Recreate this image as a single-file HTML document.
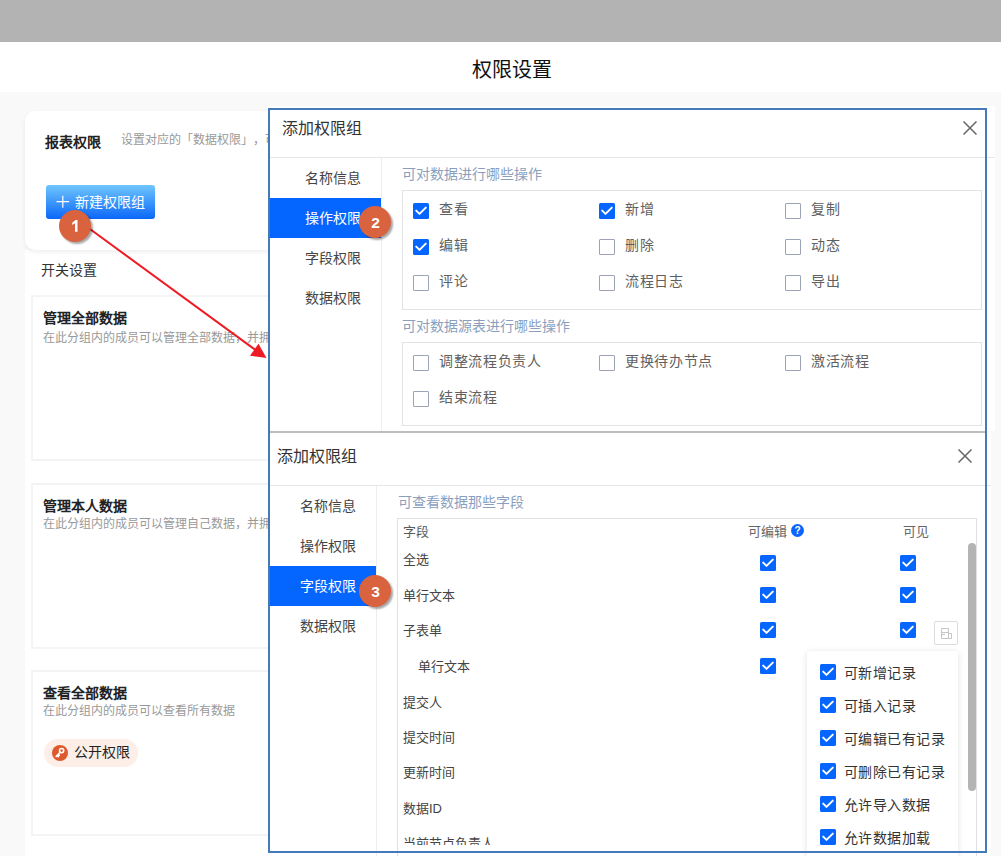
<!DOCTYPE html>
<html lang="zh-CN">
<head>
<meta charset="utf-8">
<style>
*{margin:0;padding:0;box-sizing:border-box;}
html,body{width:1001px;height:856px;overflow:hidden;}
body{position:relative;background:#f9f9f9;font-family:"Liberation Sans",sans-serif;color:#333;}
.a{position:absolute;}
.t{position:absolute;white-space:nowrap;line-height:1;}
#topbar{left:0;top:0;width:1001px;height:42px;background:#b3b3b3;}
#hdr{left:0;top:42px;width:1001px;height:50px;background:#fff;}
#card0{left:25px;top:111px;width:400px;height:139px;background:#fff;border-radius:10px;box-shadow:0 2px 5px rgba(0,0,0,0.07);}
#panel{left:25px;top:250px;width:400px;height:606px;background:#fff;}
.card{position:absolute;left:31px;width:400px;height:166px;border:2px solid #f3f4f6;background:#fff;}
.btn{left:46px;top:185px;width:109px;height:34px;border-radius:3px;background:linear-gradient(#70c6fd,#0b67f9);}
.badge{position:absolute;width:32px;height:32px;border-radius:50%;background:#d9623f;color:#fff;font-weight:bold;font-size:15.5px;line-height:34px;text-indent:1px;text-align:center;box-shadow:2px 2px 2px rgba(0,0,0,0.35);}
/* dialogs */
.dlg{position:absolute;background:#fff;overflow:hidden;}
.cb{position:absolute;width:16px;height:16px;border-radius:1.5px;}
.cb.on{background:#0565ff;}
.cb.off{border:1.5px solid #9ca3b6;background:#fff;border-radius:1px;}
.cb.on svg{position:absolute;left:0;top:0;}
</style>
</head>
<body>
<div id="topbar" class="a"></div>
<div id="hdr" class="a"></div>
<div class="t" style="left:472px;top:60px;font-size:20px;color:#111;">权限设置</div>

<div id="panel" class="a"></div>
<div id="card0" class="a"></div>
<div class="t" style="left:45px;top:135px;font-size:14px;font-weight:bold;color:#222;">报表权限</div>
<div class="t" style="left:121px;top:134px;font-size:12px;color:#999;">设置对应的「数据权限」<span style="margin-left:6px">，</span>可</div>
<div class="btn a"></div>
<svg class="a" style="left:56px;top:195px;" width="14" height="14"><path d="M0.5 6.6 H13 M6.8 0.8 V12.8" stroke="#fff" stroke-width="1.2"/></svg><div class="t" style="left:75px;top:195px;font-size:14px;color:#fff;">新建权限组</div>

<div class="t" style="left:41px;top:263px;font-size:14px;color:#333;">开关设置</div>
<div class="card" style="top:295px;"></div>
<div class="t" style="left:43px;top:311px;font-size:14px;font-weight:bold;color:#222;">管理全部数据</div>
<div class="t" style="left:43px;top:332px;font-size:12px;color:#999;">在此分组内的成员可以管理全部数据，并拥有</div>
<div class="card" style="top:483px;"></div>
<div class="t" style="left:43px;top:499px;font-size:14px;font-weight:bold;color:#222;">管理本人数据</div>
<div class="t" style="left:43px;top:518px;font-size:12px;color:#999;">在此分组内的成员可以管理自己数据，并拥有</div>
<div class="card" style="top:670px;"></div>
<div class="t" style="left:43px;top:686px;font-size:14px;font-weight:bold;color:#222;">查看全部数据</div>
<div class="t" style="left:43px;top:705px;font-size:12px;color:#999;">在此分组内的成员可以查看所有数据</div>
<div class="a" style="left:44px;top:739px;width:94px;height:28px;border-radius:14px;background:#fdeee8;"></div>
<div class="a" style="left:52px;top:745px;width:16px;height:16px;border-radius:50%;background:#de5a2c;"><svg width="16" height="16" style="position:absolute;left:0;top:0"><circle cx="9.6" cy="5.6" r="2.1" fill="none" stroke="#fff" stroke-width="1.6"/><path d="M8.2 7.2 L4.2 11.4 M5.2 10.4 L6.4 11.6 M6.4 9.2 L7.4 10.2" stroke="#fff" stroke-width="1.6" stroke-linecap="round"/></svg></div>
<div class="t" style="left:74px;top:745px;font-size:14px;color:#222;">公开权限</div>

<!-- DIALOGS -->
<div class="a" style="left:268px;top:106px;width:727px;height:325px;background:#fff;"></div>
<div class="t" style="left:282px;top:121px;font-size:16px;color:#333;">添加权限组</div>
<svg class="a" style="left:963px;top:121px;" width="14" height="14"><path d="M0.5 0.5 L13.5 13.5 M13.5 0.5 L0.5 13.5" stroke="#666" stroke-width="1.5"/></svg>
<div class="a" style="left:268px;top:157px;width:727px;height:1px;background:#e6e6e6;"></div>
<div class="a" style="left:381px;top:158px;width:1px;height:273px;background:#eeeeee;"></div>
<div class="a" style="left:268px;top:198px;width:113px;height:40px;background:#0566ff;"></div>
<div class="t" style="left:305px;top:171px;font-size:14px;color:#444;">名称信息</div>
<div class="t" style="left:305px;top:211px;font-size:14px;color:#fff;">操作权限</div>
<div class="t" style="left:305px;top:251px;font-size:14px;color:#444;">字段权限</div>
<div class="t" style="left:305px;top:291px;font-size:14px;color:#444;">数据权限</div>
<div class="t" style="left:402px;top:167px;font-size:14px;color:#8a9fbe;">可对数据进行哪些操作</div>
<div class="a" style="left:402px;top:190px;width:580px;height:120px;border:1px solid #e3e3e3;"></div>
<div class="cb on" style="left:413px;top:203px;"><svg width="16" height="16" viewBox="0 0 16 16"><path d="M3.2 7.6 L6.5 10.9 L12.8 4.6" fill="none" stroke="#fff" stroke-width="2" stroke-linecap="round" stroke-linejoin="round"/></svg></div>
<div class="t" style="left:439px;top:202px;font-size:14px;color:#606060;letter-spacing:0.7px;">查看</div>
<div class="cb on" style="left:599px;top:203px;"><svg width="16" height="16" viewBox="0 0 16 16"><path d="M3.2 7.6 L6.5 10.9 L12.8 4.6" fill="none" stroke="#fff" stroke-width="2" stroke-linecap="round" stroke-linejoin="round"/></svg></div>
<div class="t" style="left:625px;top:202px;font-size:14px;color:#606060;letter-spacing:0.7px;">新增</div>
<div class="cb off" style="left:785px;top:203px;"></div>
<div class="t" style="left:811px;top:202px;font-size:14px;color:#606060;letter-spacing:0.7px;">复制</div>
<div class="cb on" style="left:413px;top:239px;"><svg width="16" height="16" viewBox="0 0 16 16"><path d="M3.2 7.6 L6.5 10.9 L12.8 4.6" fill="none" stroke="#fff" stroke-width="2" stroke-linecap="round" stroke-linejoin="round"/></svg></div>
<div class="t" style="left:439px;top:238px;font-size:14px;color:#606060;letter-spacing:0.7px;">编辑</div>
<div class="cb off" style="left:599px;top:239px;"></div>
<div class="t" style="left:625px;top:238px;font-size:14px;color:#606060;letter-spacing:0.7px;">删除</div>
<div class="cb off" style="left:785px;top:239px;"></div>
<div class="t" style="left:811px;top:238px;font-size:14px;color:#606060;letter-spacing:0.7px;">动态</div>
<div class="cb off" style="left:413px;top:275px;"></div>
<div class="t" style="left:439px;top:274px;font-size:14px;color:#606060;letter-spacing:0.7px;">评论</div>
<div class="cb off" style="left:599px;top:275px;"></div>
<div class="t" style="left:625px;top:274px;font-size:14px;color:#606060;letter-spacing:0.7px;">流程日志</div>
<div class="cb off" style="left:785px;top:275px;"></div>
<div class="t" style="left:811px;top:274px;font-size:14px;color:#606060;letter-spacing:0.7px;">导出</div>
<div class="t" style="left:402px;top:319px;font-size:14px;color:#8a9fbe;">可对数据源表进行哪些操作</div>
<div class="a" style="left:402px;top:342px;width:580px;height:84px;border:1px solid #e3e3e3;"></div>
<div class="cb off" style="left:413px;top:355px;"></div>
<div class="t" style="left:439px;top:354px;font-size:14px;color:#606060;letter-spacing:0.7px;">调整流程负责人</div>
<div class="cb off" style="left:599px;top:355px;"></div>
<div class="t" style="left:625px;top:354px;font-size:14px;color:#606060;letter-spacing:0.7px;">更换待办节点</div>
<div class="cb off" style="left:785px;top:355px;"></div>
<div class="t" style="left:811px;top:354px;font-size:14px;color:#606060;letter-spacing:0.7px;">激活流程</div>
<div class="cb off" style="left:413px;top:391px;"></div>
<div class="t" style="left:439px;top:390px;font-size:14px;color:#606060;letter-spacing:0.7px;">结束流程</div>
<div class="a" style="left:269px;top:431px;width:718px;height:2px;background:#bdbdbd;"></div>
<div class="a" style="left:270px;top:433px;width:721px;height:423px;background:#fff;"></div>
<div class="t" style="left:277px;top:449px;font-size:16px;color:#333;">添加权限组</div>
<svg class="a" style="left:958px;top:449px;" width="14" height="14"><path d="M0.5 0.5 L13.5 13.5 M13.5 0.5 L0.5 13.5" stroke="#666" stroke-width="1.5"/></svg>
<div class="a" style="left:270px;top:485px;width:721px;height:1px;background:#e6e6e6;"></div>
<div class="a" style="left:376px;top:486px;width:1px;height:370px;background:#eeeeee;"></div>
<div class="a" style="left:270px;top:566px;width:106px;height:40px;background:#0566ff;"></div>
<div class="t" style="left:300px;top:499px;font-size:14px;color:#444;">名称信息</div>
<div class="t" style="left:300px;top:539px;font-size:14px;color:#444;">操作权限</div>
<div class="t" style="left:300px;top:579px;font-size:14px;color:#fff;">字段权限</div>
<div class="t" style="left:300px;top:619px;font-size:14px;color:#444;">数据权限</div>
<div class="t" style="left:398px;top:495px;font-size:14px;color:#8a9fbe;">可查看数据那些字段</div>
<div class="a" style="left:397px;top:518px;width:580px;height:360px;border:1px solid #e0e0e0;"></div>
<div class="a" style="left:398px;top:519px;width:578px;height:326px;overflow:hidden;">
<div class="t" style="left:5px;top:6px;font-size:13px;color:#5a5a5a;">字段</div>
<div class="t" style="left:350px;top:6px;font-size:13px;color:#666;">可编辑</div>
<div class="a" style="left:393px;top:5px;width:13px;height:13px;border-radius:50%;background:#0a66ff;color:#fff;font-size:10px;font-weight:bold;line-height:13px;text-align:center;font-family:'Liberation Sans',sans-serif;">?</div>
<div class="t" style="left:505px;top:6px;font-size:13px;color:#666;">可见</div>
<div class="t" style="left:5px;top:34px;font-size:13px;color:#444;">全选</div>
<div class="t" style="left:5px;top:70px;font-size:13px;color:#444;">单行文本</div>
<div class="t" style="left:5px;top:105px;font-size:13px;color:#444;">子表单</div>
<div class="t" style="left:20px;top:141px;font-size:13px;color:#444;">单行文本</div>
<div class="t" style="left:5px;top:177px;font-size:13px;color:#444;">提交人</div>
<div class="t" style="left:5px;top:212px;font-size:13px;color:#444;">提交时间</div>
<div class="t" style="left:5px;top:247px;font-size:13px;color:#444;">更新时间</div>
<div class="t" style="left:5px;top:283px;font-size:13px;color:#444;">数据ID</div>
<div class="t" style="left:5px;top:318px;font-size:13px;color:#444;">当前节点负责人</div>
<div class="cb on" style="left:362px;top:36px;"><svg width="16" height="16" viewBox="0 0 16 16"><path d="M3.2 7.6 L6.5 10.9 L12.8 4.6" fill="none" stroke="#fff" stroke-width="2" stroke-linecap="round" stroke-linejoin="round"/></svg></div>
<div class="cb on" style="left:362px;top:68px;"><svg width="16" height="16" viewBox="0 0 16 16"><path d="M3.2 7.6 L6.5 10.9 L12.8 4.6" fill="none" stroke="#fff" stroke-width="2" stroke-linecap="round" stroke-linejoin="round"/></svg></div>
<div class="cb on" style="left:362px;top:103px;"><svg width="16" height="16" viewBox="0 0 16 16"><path d="M3.2 7.6 L6.5 10.9 L12.8 4.6" fill="none" stroke="#fff" stroke-width="2" stroke-linecap="round" stroke-linejoin="round"/></svg></div>
<div class="cb on" style="left:362px;top:139px;"><svg width="16" height="16" viewBox="0 0 16 16"><path d="M3.2 7.6 L6.5 10.9 L12.8 4.6" fill="none" stroke="#fff" stroke-width="2" stroke-linecap="round" stroke-linejoin="round"/></svg></div>
<div class="cb on" style="left:502px;top:36px;"><svg width="16" height="16" viewBox="0 0 16 16"><path d="M3.2 7.6 L6.5 10.9 L12.8 4.6" fill="none" stroke="#fff" stroke-width="2" stroke-linecap="round" stroke-linejoin="round"/></svg></div>
<div class="cb on" style="left:502px;top:68px;"><svg width="16" height="16" viewBox="0 0 16 16"><path d="M3.2 7.6 L6.5 10.9 L12.8 4.6" fill="none" stroke="#fff" stroke-width="2" stroke-linecap="round" stroke-linejoin="round"/></svg></div>
<div class="cb on" style="left:502px;top:103px;"><svg width="16" height="16" viewBox="0 0 16 16"><path d="M3.2 7.6 L6.5 10.9 L12.8 4.6" fill="none" stroke="#fff" stroke-width="2" stroke-linecap="round" stroke-linejoin="round"/></svg></div>
</div>
<div class="a" style="left:934px;top:621px;width:24px;height:24px;border:1px solid #dcdcdc;border-radius:2px;background:#fff;"><svg width="24" height="24" style="position:absolute;left:-1px;top:-1px"><path d="M7.5 7.5 H14.5 V17.5 H7.5 Z M7.5 11.5 H14.5 M7.5 13.5 H11 M14.5 12.5 H17.5 V17.5 H14.5" fill="none" stroke="#c6c6c6" stroke-width="1"/></svg></div>
<div class="a" style="left:968px;top:543px;width:8px;height:248px;border-radius:4px;background:#b4b4b4;"></div>
<div class="a" style="left:807px;top:651px;width:151px;height:215px;background:#fff;border-radius:3px;box-shadow:0 1px 6px rgba(0,0,0,0.12);"></div>
<div class="cb on" style="left:820px;top:664px;"><svg width="16" height="16" viewBox="0 0 16 16"><path d="M3.2 7.6 L6.5 10.9 L12.8 4.6" fill="none" stroke="#fff" stroke-width="2" stroke-linecap="round" stroke-linejoin="round"/></svg></div>
<div class="t" style="left:843.5px;top:666px;font-size:14px;color:#333;letter-spacing:0.5px;">可新增记录</div>
<div class="cb on" style="left:820px;top:697px;"><svg width="16" height="16" viewBox="0 0 16 16"><path d="M3.2 7.6 L6.5 10.9 L12.8 4.6" fill="none" stroke="#fff" stroke-width="2" stroke-linecap="round" stroke-linejoin="round"/></svg></div>
<div class="t" style="left:843.5px;top:699px;font-size:14px;color:#333;letter-spacing:0.5px;">可插入记录</div>
<div class="cb on" style="left:820px;top:730px;"><svg width="16" height="16" viewBox="0 0 16 16"><path d="M3.2 7.6 L6.5 10.9 L12.8 4.6" fill="none" stroke="#fff" stroke-width="2" stroke-linecap="round" stroke-linejoin="round"/></svg></div>
<div class="t" style="left:843.5px;top:732px;font-size:14px;color:#333;letter-spacing:0.5px;">可编辑已有记录</div>
<div class="cb on" style="left:820px;top:763px;"><svg width="16" height="16" viewBox="0 0 16 16"><path d="M3.2 7.6 L6.5 10.9 L12.8 4.6" fill="none" stroke="#fff" stroke-width="2" stroke-linecap="round" stroke-linejoin="round"/></svg></div>
<div class="t" style="left:843.5px;top:765px;font-size:14px;color:#333;letter-spacing:0.5px;">可删除已有记录</div>
<div class="cb on" style="left:820px;top:796px;"><svg width="16" height="16" viewBox="0 0 16 16"><path d="M3.2 7.6 L6.5 10.9 L12.8 4.6" fill="none" stroke="#fff" stroke-width="2" stroke-linecap="round" stroke-linejoin="round"/></svg></div>
<div class="t" style="left:843.5px;top:798px;font-size:14px;color:#333;letter-spacing:0.5px;">允许导入数据</div>
<div class="cb on" style="left:820px;top:829px;"><svg width="16" height="16" viewBox="0 0 16 16"><path d="M3.2 7.6 L6.5 10.9 L12.8 4.6" fill="none" stroke="#fff" stroke-width="2" stroke-linecap="round" stroke-linejoin="round"/></svg></div>
<div class="t" style="left:843.5px;top:831px;font-size:14px;color:#333;letter-spacing:0.5px;">允许数据加载</div>

<!-- annotation -->
<svg class="a" style="left:0;top:0;" width="1001" height="856">
  <line x1="80" y1="221.8" x2="255" y2="349.6" stroke="#ed1c24" stroke-width="2"/>
  <polygon points="266.5,358 250,355.7 258.5,343.8" fill="#ed1c24"/>
  <rect x="269" y="109" width="717" height="743" fill="none" stroke="#4479ba" stroke-width="2"/>
</svg>
<div class="badge" style="left:59px;top:210px;"><svg width="32" height="32" style="position:absolute;left:0;top:0"><path d="M16 21.8 V13.2 L13.2 15 V12.7 L16.6 9.9 H18.5 V21.8 Z" fill="#fff"/></svg></div>
<div class="badge" style="left:359px;top:206px;">2</div>
<div class="badge" style="left:359px;top:575px;">3</div>
</body>
</html>
